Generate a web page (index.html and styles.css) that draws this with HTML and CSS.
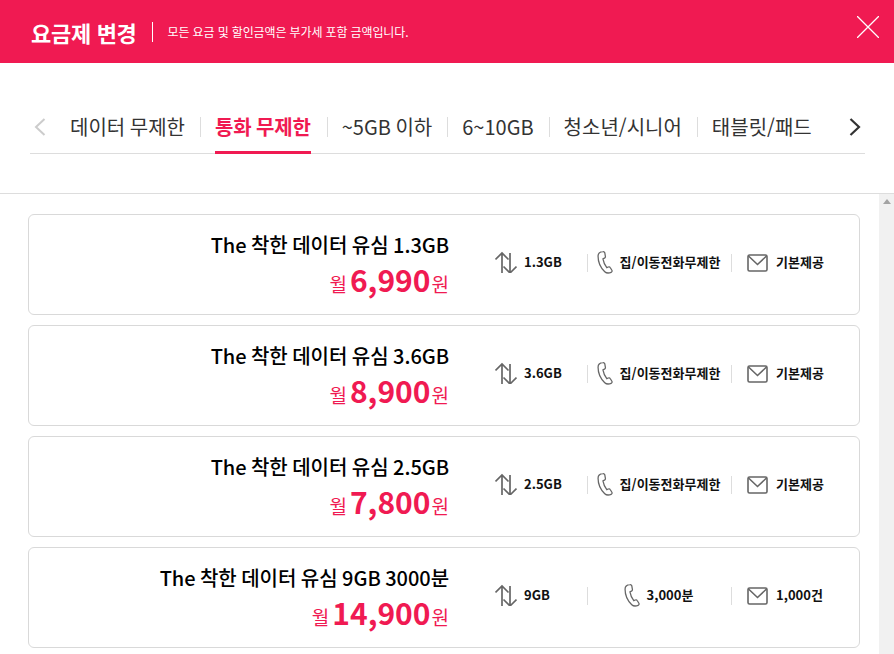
FILE: index.html
```html
<!DOCTYPE html>
<html lang="ko">
<head>
    <meta charset="UTF-8">
    <meta name="viewport" content="width=device-width, initial-scale=1.0">
    <title>요금제 변경</title>
    <link rel="stylesheet" href="styles.css">
</head>
<body>

<svg class="icon-defs" width="0" height="0">
    <symbol id="i-data" viewBox="0 0 22 22">
        <path d="M7 22V2M.5 8.500L7 2l6.500 6.500M15 2v20M8.500 15.500L15 22l6.500-6.500" fill="none" stroke="#666" stroke-width="1.700"/>
    </symbol>
    <symbol id="i-phone" viewBox="0 0 16 22">
        <path d="M5.500 1.200C3 1.400 1 3 1 5.500c0 5 2.600 11 6.300 14.600 1.500 1.400 3.700 1.600 6 .6.900-.4 1.100-1.200.7-1.900l-1.600-2.600c-.4-.7-1.100-.8-1.800-.5l-1.400.6C7.500 14 6 10.500 5.600 8l1.400-.6c.7-.3 1-.9.900-1.700L7.300 2.300C7.100 1.500 6.400 1.100 5.500 1.200z" fill="none" stroke="#666" stroke-width="1.200"/>
    </symbol>
    <symbol id="i-mail" viewBox="0 0 21 18">
        <rect x="1" y="1" width="19" height="16" rx="1.500" fill="none" stroke="#666" stroke-width="1.600"/>
        <path d="M1.500 2l9 8.500 9-8.500" fill="none" stroke="#666" stroke-width="1.600"/>
    </symbol>
</svg>

<div class="popup-head">
    <h1>요금제 변경</h1>
    <p>모든 요금 및 할인금액은 부가세 포함 금액입니다.</p>
    <button class="btn-close" type="button" aria-label="닫기">
        <svg width="22" height="22" viewBox="0 0 22 22"><path d="M0 0l22 22M22 0L0 22" stroke="#fff" stroke-width="1.300" fill="none"/></svg>
    </button>
</div>

<div class="tab-area">
    <div class="tab-wrap">
        <span class="tab-arrow">
            <svg width="12" height="18" viewBox="0 0 12 18"><path d="M10.500 1L2 9l8.500 8" fill="none" stroke="#ccc" stroke-width="2"/></svg>
        </span>
        <ul class="tab-list">
            <li>데이터 무제한</li>
            <li class="on">통화 무제한</li>
            <li>~5GB 이하</li>
            <li>6~10GB</li>
            <li>청소년/시니어</li>
            <li>태블릿/패드</li>
        </ul>
        <span class="tab-arrow next">
            <svg width="12" height="18" viewBox="0 0 12 18"><path d="M1.500 1L10 9l-8.500 8" fill="none" stroke="#333" stroke-width="2.200"/></svg>
        </span>
    </div>
</div>

<div class="scroll-area">
    <div class="plan-list">
        <div class="plan-card">
            <div class="plan-info">
                <strong class="plan-name">The 착한 데이터 유심 1.3GB</strong>
                <div class="plan-price">월<b>6,990</b>원</div>
            </div>
            <div class="spec spec-data"><svg class="ico-data"><use href="#i-data"/></svg>1.3GB</div>
            <div class="spec spec-call"><svg class="ico-phone"><use href="#i-phone"/></svg>집/이동전화무제한</div>
            <div class="spec spec-sms"><svg class="ico-mail"><use href="#i-mail"/></svg>기본제공</div>
        </div>
        <div class="plan-card">
            <div class="plan-info">
                <strong class="plan-name">The 착한 데이터 유심 3.6GB</strong>
                <div class="plan-price">월<b>8,900</b>원</div>
            </div>
            <div class="spec spec-data"><svg class="ico-data"><use href="#i-data"/></svg>3.6GB</div>
            <div class="spec spec-call"><svg class="ico-phone"><use href="#i-phone"/></svg>집/이동전화무제한</div>
            <div class="spec spec-sms"><svg class="ico-mail"><use href="#i-mail"/></svg>기본제공</div>
        </div>
        <div class="plan-card">
            <div class="plan-info">
                <strong class="plan-name">The 착한 데이터 유심 2.5GB</strong>
                <div class="plan-price">월<b>7,800</b>원</div>
            </div>
            <div class="spec spec-data"><svg class="ico-data"><use href="#i-data"/></svg>2.5GB</div>
            <div class="spec spec-call"><svg class="ico-phone"><use href="#i-phone"/></svg>집/이동전화무제한</div>
            <div class="spec spec-sms"><svg class="ico-mail"><use href="#i-mail"/></svg>기본제공</div>
        </div>
        <div class="plan-card">
            <div class="plan-info">
                <strong class="plan-name">The 착한 데이터 유심 9GB 3000분</strong>
                <div class="plan-price">월<b>14,900</b>원</div>
            </div>
            <div class="spec spec-data"><svg class="ico-data"><use href="#i-data"/></svg>9GB</div>
            <div class="spec spec-call"><svg class="ico-phone"><use href="#i-phone"/></svg>3,000분</div>
            <div class="spec spec-sms"><svg class="ico-mail"><use href="#i-mail"/></svg>1,000건</div>
        </div>
    </div>
    <div class="scrollbar"><span class="scroll-up"></span></div>
</div>

</body>
</html>
```

FILE: styles.css
```css
* {
    box-sizing: border-box;
}

html, body {
    height: 100%;
}

body {
    margin: 0;
    height: 654px;
    overflow: hidden;
    display: flex;
    flex-direction: column;
    background-color: #fff;
    color: #111;
    font-family: "Noto Sans CJK KR", "Noto Sans", sans-serif;
}

.icon-defs {
    display: none;
}

.popup-head {
    flex: none;
    height: 63px;
    padding: 0 15px 0 31px;
    display: flex;
    align-items: center;
    background-color: #f01a52;
    color: #fff;
}

.popup-head h1 {
    margin: 0;
    font-size: 22px;
    font-weight: 700;
    line-height: 30px;
    letter-spacing: -0.3px;
}

.popup-head p {
    margin: 0 0 0 15px;
    padding-left: 15px;
    border-left: 1px solid #fff;
    font-size: 12px;
    line-height: 20px;
    letter-spacing: -0.13px;
}

.btn-close {
    margin-left: auto;
    margin-bottom: 9px;
    padding: 0;
    border: none;
    background: none;
    width: 22px;
    height: 22px;
}

.btn-close svg {
    display: block;
}

.tab-area {
    flex: none;
    height: 130px;
    padding: 44px 29px 0 30px;
}

.tab-wrap {
    display: flex;
    align-items: flex-start;
    height: 47px;
    border-bottom: 1px solid #ddd;
}

.tab-arrow {
    flex: none;
    width: 25px;
    height: 40px;
    padding-left: 4px;
    display: flex;
    align-items: center;
}

.tab-arrow svg {
    display: block;
}

.tab-arrow.next {
    margin-left: auto;
    padding-left: 0;
    width: 16px;
}

.tab-list {
    display: flex;
    margin: 0;
    padding: 0;
    list-style: none;
}

.tab-list li {
    position: relative;
    height: 46px;
    margin-left: 15px;
    padding-right: 15px;
    font-size: 20px;
    line-height: 40px;
    word-spacing: -1px;
    color: #333;
    white-space: nowrap;
}

.tab-list li + li {
    margin-left: 0;
    padding-left: 15px;
}

.tab-list li + li::before {
    content: "";
    position: absolute;
    left: 0;
    top: 10px;
    height: 20px;
    border-left: 1px solid #ddd;
}

.tab-list li.on {
    padding-right: 16px;
    color: #f01a52;
    font-weight: 700;
    letter-spacing: -0.15px;
}

.tab-list li.on::after {
    content: "";
    position: absolute;
    left: 15px;
    right: 16px;
    bottom: -1px;
    height: 3px;
    background-color: #f01a52;
}

.scroll-area {
    flex: 1;
    min-height: 0;
    display: flex;
    border-top: 1px solid #ddd;
}

.plan-list {
    flex: 1;
    padding: 20px 19px 0 28px;
}

.plan-card {
    display: grid;
    grid-template-columns: 1fr 107px 144px 128px;
    align-items: center;
    height: 101px;
    margin-bottom: 10px;
    border: 1px solid #d9d9d9;
    border-radius: 6px;
}

.plan-info {
    padding-top: 5px;
    padding-right: 31px;
    text-align: right;
}

.plan-name {
    display: block;
    font-size: 20px;
    font-weight: 500;
    line-height: 30px;
    word-spacing: -1px;
    letter-spacing: -0.05px;
    color: #000;
}

.plan-price {
    margin-top: -1px;
    font-size: 19px;
    line-height: 40px;
    color: #f01a52;
}

.plan-price b {
    margin: 0 1px 0 3px;
    font-size: 30px;
    font-weight: 700;
}

.spec {
    display: flex;
    align-items: center;
    height: 18px;
    margin-bottom: 3px;
    padding-left: 15px;
    padding-bottom: 3px;
    font-size: 13px;
    font-weight: 700;
    color: #111;
    white-space: nowrap;
}

.spec + .spec {
    border-left: 1px solid #ddd;
}

.spec-call {
    justify-content: center;
    padding-left: 0;
    padding-right: 2px;
}

.spec svg {
    flex: none;
    overflow: visible;
}

.ico-data {
    width: 22px;
    height: 22px;
    margin-right: 7px;
}

.ico-phone {
    width: 17px;
    height: 24px;
    margin-right: 6px;
}

.ico-mail {
    width: 21px;
    height: 18px;
    margin-top: 2px;
    margin-right: 8px;
}

.scrollbar {
    flex: none;
    width: 15px;
    background-color: #f1f1f1;
}

.scroll-up {
    display: block;
    width: 0;
    margin: 5px auto 0;
    border: 4px solid transparent;
    border-top: none;
    border-bottom: 5px solid #a3a3a3;
}
```
